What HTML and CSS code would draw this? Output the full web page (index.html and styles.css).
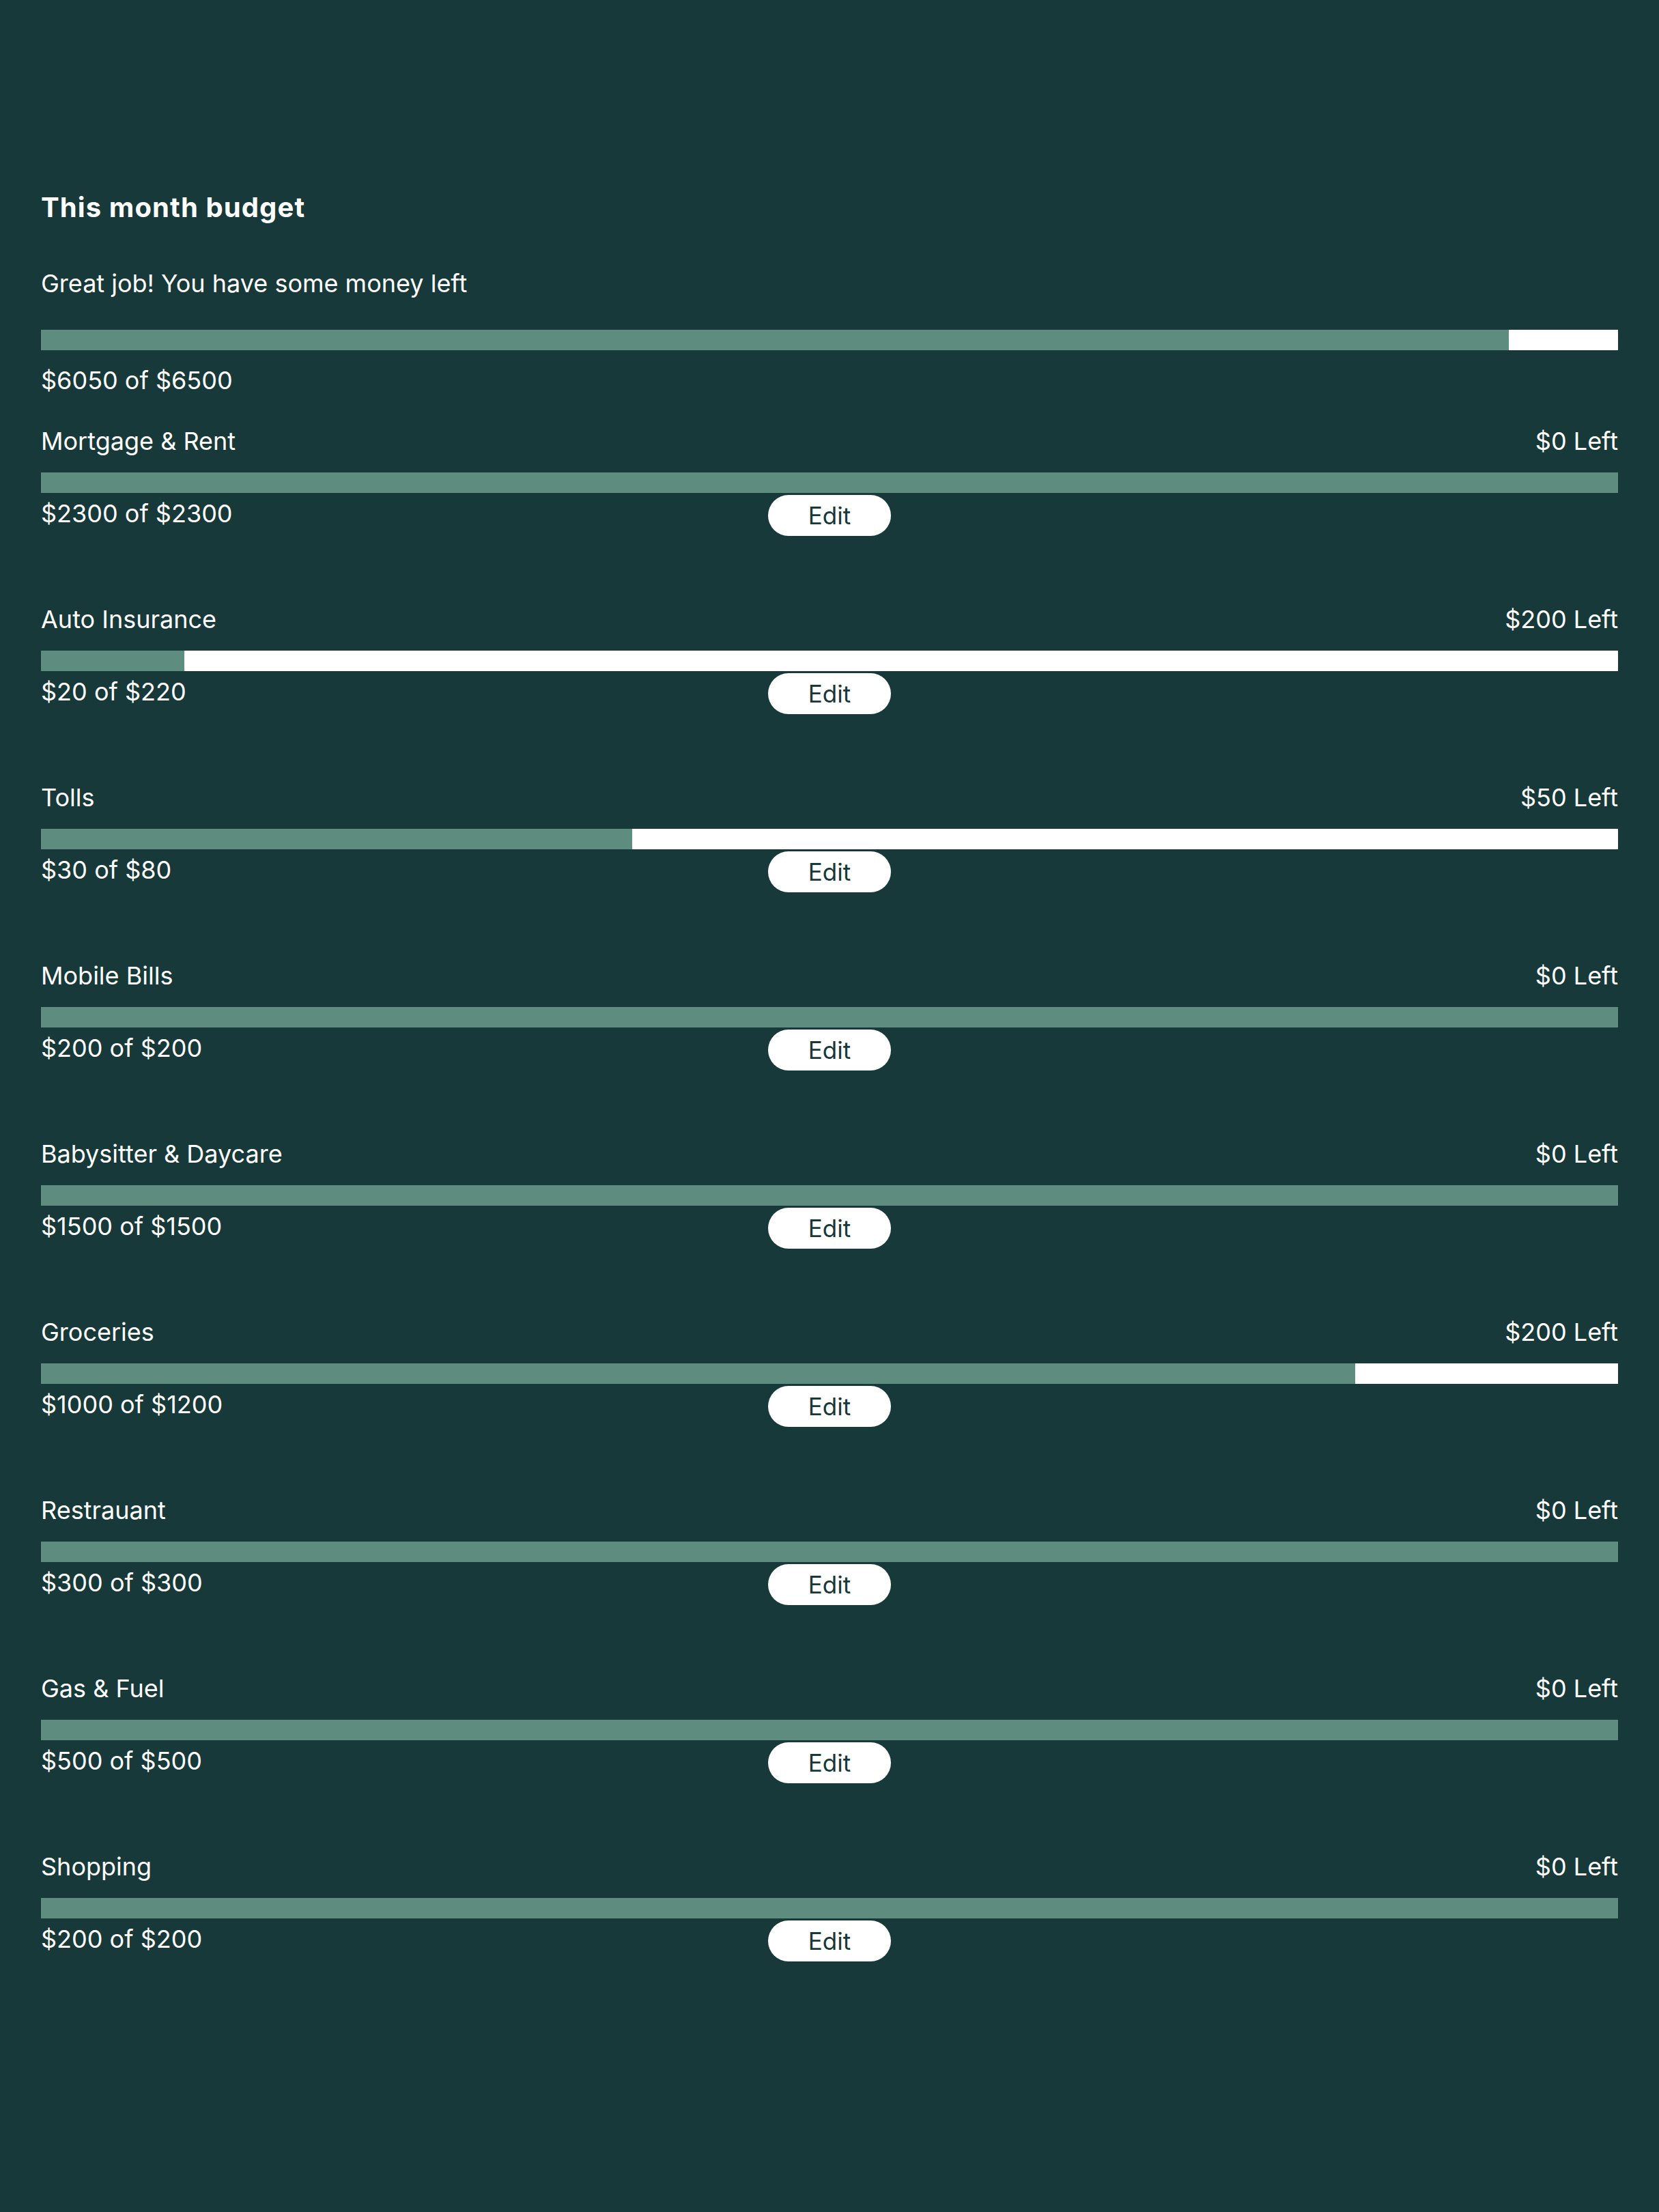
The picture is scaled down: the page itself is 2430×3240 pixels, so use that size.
FILE: index.html
```html
<!DOCTYPE html>
<html lang="en">
<head>
<meta charset="utf-8">
<title>This month budget</title>
<link rel="stylesheet" href="styles.css">
</head>
<body>
<main class="page">
  <h1 class="title">This month budget</h1>
  <section class="summary">
    <p class="text summary-msg">Great job! You have some money left</p>
    <div class="bar"><div class="fill" style="width:93.08%"></div></div>
    <p class="text summary-amount">$6050 of $6500</p>
  </section>

  <section class="row">
    <div class="row-head"><span class="text">Mortgage &amp; Rent</span><span class="text">$0 Left</span></div>
    <div class="bar"><div class="fill" style="width:100%"></div></div>
    <div class="row-foot"><span class="text amount">$2300 of $2300</span><button class="edit">Edit</button><span></span></div>
  </section>

  <section class="row">
    <div class="row-head"><span class="text">Auto Insurance</span><span class="text">$200 Left</span></div>
    <div class="bar"><div class="fill" style="width:9.09%"></div></div>
    <div class="row-foot"><span class="text amount">$20 of $220</span><button class="edit">Edit</button><span></span></div>
  </section>

  <section class="row">
    <div class="row-head"><span class="text">Tolls</span><span class="text">$50 Left</span></div>
    <div class="bar"><div class="fill" style="width:37.5%"></div></div>
    <div class="row-foot"><span class="text amount">$30 of $80</span><button class="edit">Edit</button><span></span></div>
  </section>

  <section class="row">
    <div class="row-head"><span class="text">Mobile Bills</span><span class="text">$0 Left</span></div>
    <div class="bar"><div class="fill" style="width:100%"></div></div>
    <div class="row-foot"><span class="text amount">$200 of $200</span><button class="edit">Edit</button><span></span></div>
  </section>

  <section class="row">
    <div class="row-head"><span class="text">Babysitter &amp; Daycare</span><span class="text">$0 Left</span></div>
    <div class="bar"><div class="fill" style="width:100%"></div></div>
    <div class="row-foot"><span class="text amount">$1500 of $1500</span><button class="edit">Edit</button><span></span></div>
  </section>

  <section class="row">
    <div class="row-head"><span class="text">Groceries</span><span class="text">$200 Left</span></div>
    <div class="bar"><div class="fill" style="width:83.33%"></div></div>
    <div class="row-foot"><span class="text amount">$1000 of $1200</span><button class="edit">Edit</button><span></span></div>
  </section>

  <section class="row">
    <div class="row-head"><span class="text">Restrauant</span><span class="text">$0 Left</span></div>
    <div class="bar"><div class="fill" style="width:100%"></div></div>
    <div class="row-foot"><span class="text amount">$300 of $300</span><button class="edit">Edit</button><span></span></div>
  </section>

  <section class="row">
    <div class="row-head"><span class="text">Gas &amp; Fuel</span><span class="text">$0 Left</span></div>
    <div class="bar"><div class="fill" style="width:100%"></div></div>
    <div class="row-foot"><span class="text amount">$500 of $500</span><button class="edit">Edit</button><span></span></div>
  </section>

  <section class="row">
    <div class="row-head"><span class="text">Shopping</span><span class="text">$0 Left</span></div>
    <div class="bar"><div class="fill" style="width:100%"></div></div>
    <div class="row-foot"><span class="text amount">$200 of $200</span><button class="edit">Edit</button><span></span></div>
  </section>
</main>
</body>
</html>
```

FILE: styles.css
```css
html {
  background: #18393a;
  min-height: 100%;
}

body {
  margin: 0;
  background: #18393a;
  color: #ffffff;
  font-family: Inter, "Noto Sans", sans-serif;
  min-height: 3240px;
}

.page {
  padding: 280px 60px 0;
}

.title {
  margin: 0;
  font-size: 40px;
  line-height: 48px;
  font-weight: 700;
  letter-spacing: 1.1px;
}

.text {
  margin: 0;
  font-size: 36px;
  line-height: 44px;
  font-weight: 400;
}

.summary {
  margin-top: 65px;
}

.summary-msg {
  margin-bottom: 46px;
}

.summary-amount {
  margin-top: 22px;
  margin-bottom: 45px;
}

.bar {
  height: 30px;
  background: #ffffff;
  display: flex;
}

.fill {
  height: 100%;
  background: #5e8c7e;
}

.row {
  margin-bottom: 100px;
}

.row-head {
  display: flex;
  justify-content: space-between;
  margin-bottom: 24px;
}

.row-foot {
  display: grid;
  grid-template-columns: 1fr auto 1fr;
  align-items: start;
  margin-top: 3px;
}

.amount {
  padding-top: 5px;
}

.edit {
  width: 180px;
  height: 60px;
  border: 0;
  border-radius: 30px;
  background: #ffffff;
  color: #18393a;
  font-family: Inter, "Noto Sans", sans-serif;
  font-size: 35px;
  line-height: 60px;
  padding: 0;
}
```
